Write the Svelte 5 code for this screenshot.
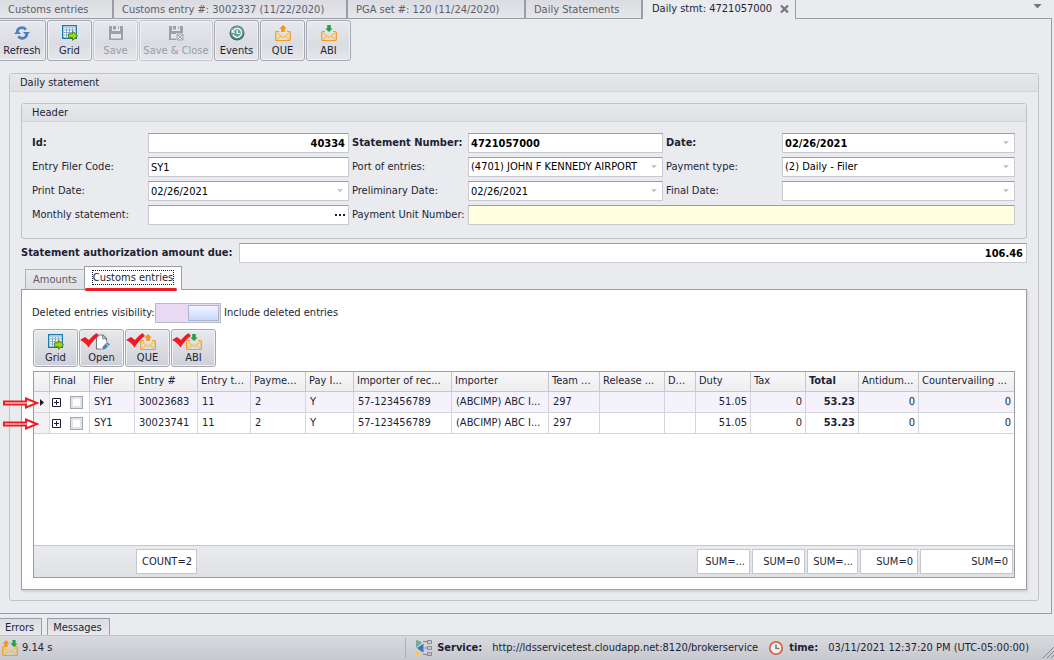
<script>
  const docTabs = [
    { title: "Customs entries", width: 114 },
    { title: "Customs entry #: 3002337 (11/22/2020)", width: 234 },
    { title: "PGA set #: 120 (11/24/2020)", width: 178 },
    { title: "Daily Statements", width: 117 },
  ];

  const toolbar = [
    { label: "Refresh", icon: "refresh", width: 48 },
    { label: "Grid", icon: "grid", width: 45 },
    { label: "Save", icon: "save", width: 45, disabled: true },
    { label: "Save & Close", icon: "saveClose", width: 74, disabled: true },
    { label: "Events", icon: "events", width: 45 },
    { label: "QUE", icon: "que", width: 45 },
    { label: "ABI", icon: "abi", width: 45 },
  ];

  const gridToolbar = [
    { label: "Grid", icon: "grid" },
    { label: "Open", icon: "open", marked: true },
    { label: "QUE", icon: "que", marked: true },
    { label: "ABI", icon: "abi", marked: true },
  ];

  const fields = [
    { id: "id", label: "Id:", value: "40334", bold: true, right: true },
    { id: "number", label: "Statement Number:", value: "4721057000", bold: true },
    { id: "date", label: "Date:", value: "02/26/2021", bold: true, kind: "date" },
    { id: "filer", label: "Entry Filer Code:", value: "SY1" },
    { id: "port", label: "Port of entries:", value: "(4701) JOHN F KENNEDY AIRPORT", kind: "select" },
    { id: "ptype", label: "Payment type:", value: "(2) Daily - Filer", kind: "select" },
    { id: "print", label: "Print Date:", value: "02/26/2021", kind: "date" },
    { id: "prelim", label: "Preliminary Date:", value: "02/26/2021", kind: "date" },
    { id: "final", label: "Final Date:", value: "", kind: "date" },
    { id: "monthly", label: "Monthly statement:", value: "", kind: "lookup" },
    { id: "unit", label: "Payment Unit Number:", value: "", wide: true },
  ];

  const columns = [
    { key: "filer", title: "Filer", width: 45 },
    { key: "entry", title: "Entry #", width: 63, sum: "COUNT=2" },
    { key: "type", title: "Entry t...", width: 53 },
    { key: "payment", title: "Payme...", width: 55 },
    { key: "payInd", title: "Pay I...", width: 48 },
    { key: "record", title: "Importer of rec...", width: 98 },
    { key: "importer", title: "Importer", width: 97 },
    { key: "team", title: "Team ...", width: 51 },
    { key: "release", title: "Release ...", width: 65 },
    { key: "d", title: "D...", width: 31 },
    { key: "duty", title: "Duty", width: 55, right: true, sum: "SUM=..." },
    { key: "tax", title: "Tax", width: 55, right: true, sum: "SUM=0" },
    { key: "total", title: "Total", width: 53, right: true, bold: true, sum: "SUM=..." },
    { key: "antidumping", title: "Antidum...", width: 60, right: true, sum: "SUM=0" },
    { key: "countervailing", title: "Countervailing ...", width: 95, right: true, sum: "SUM=0" },
  ];

  const base = {
    filer: "SY1",
    type: "11",
    payment: "2",
    payInd: "Y",
    record: "57-123456789",
    importer: "(ABCIMP) ABC I...",
    team: "297",
    release: "",
    d: "",
    duty: "51.05",
    tax: "0",
    total: "53.23",
    antidumping: "0",
    countervailing: "0",
  };
  const rows = [
    { ...base, entry: "30023683" },
    { ...base, entry: "30023741" },
  ];

  let selected = $state(0);
  let includeDeleted = $state(true);
</script>

{#snippet envelope()}
  <path d="M4 6.500H1.700Q.700 6.500 .700 7.500v7q0 1 1 1h12.600q1 0 1-1v-7q0-1-1-1H12" fill="none" stroke="#f79a2b" stroke-width="1.200" />
  <path d="M1.500 7.500 8 12.500l6.500-5M2 14.500l4-3.500M14 14.500 10 11" fill="none" stroke="#fbc23c" stroke-width="1.200" />
{/snippet}

{#snippet arrowDown()}
  <svg class="caret" viewBox="0 0 6 4" aria-hidden="true"><path d="M0 0h6L3 3.600z" fill="#c9cad1" /></svg>
{/snippet}

{#snippet icon(name)}
  <svg class="icon" viewBox="0 0 16 16" aria-hidden="true">
    {#if name === "refresh"}
      <path d="M3 6.500A5 5 0 0 1 11.800 4.600M13 9.500A5 5 0 0 1 4.200 11.400" fill="none" stroke="#4a80bd" stroke-width="2.600" />
      <path d="M9 7h7l-3.500 4zM0 9h7L3.500 5z" fill="#4a80bd" />
    {:else if name === "grid"}
      <path d="M.7.700h13.600v12.600H.7z" fill="#fff" stroke="#2079ad" stroke-width="1.400" />
      <path d="M1.400 1.400h12.200v2H1.400z" fill="#a9d3e8" />
      <path d="M2 5h11M2 7.500h11M2 10h11M4.500 3v9.500M7.500 3v9.500M10.500 3v9.500" stroke="#86aac7" stroke-width="1" />
      <path d="M6.600 8.800h4V6.300l5 4.500-5 4.500v-2.600h-4z" fill="#a5d319" stroke="#47880f" stroke-width="1" />
    {:else if name === "save" || name === "saveClose"}
      <path d="M1 1h14v14H1z" fill="#8f9097" />
      <path d="M4 1h8v5H4zM3 9h10v4.500H3z" fill="#e7e8eb" />
      <path d="M5 1h3v3.500H5zM10 1.500h1V4h-1z" fill="#8f9097" />
      {#if name === "saveClose"}
        <path d="M8 8h8v8H8z" fill="#e7e8eb" />
        <path d="M9 9h6v6H9zM9.500 9.500l5 5M14.500 9.500l-5 5" fill="none" stroke="#8f9097" stroke-width="1" />
      {/if}
    {:else if name === "events"}
      <circle cx="8" cy="8" r="7.500" fill="#38736f" />
      <circle cx="8" cy="7.200" r="6.500" fill="#6b9d98" />
      <path d="M4 9.500A4.400 4.400 0 1 0 4.200 5.800M3.200 4.500v2.700h2.700" fill="none" stroke="#fff" stroke-width="1.200" />
      <path d="M8.200 5v3.500h2.600" fill="none" stroke="#fff" stroke-width="1.200" />
    {:else if name === "que"}
      {@render envelope()}
      <path d="M8 0l3.800 3.800H9.800V7H6.200V3.800H4.200z" fill="#f7941e" />
    {:else if name === "abi"}
      {@render envelope()}
      <path d="M8 7L4.200 3.500h2V0h3.600v3.500h2z" fill="#20a149" />
    {:else if name === "open"}
      <path d="M2.500 1H9L12.500 4.500V8L8 15H2.500z" fill="#fff" />
      <path d="M7.500 15h-5V1H9l3.500 3.500v3M8.700 1v3.800h3.800" fill="none" stroke="#77787f" stroke-width="1.100" />
      <path d="M8 15.800l.8-3.300L13.200 8l2.600 2.600-4.500 4.500z" fill="#4d82bc" />
      <path d="M11.700 9.400l2.800 2.700" stroke="#fff" stroke-width=".7" />
    {:else if name === "status"}
      {@render envelope()}
      <path d="M4 0l3.600 3.800H5.600V7H2.400V3.800H.4z" fill="#f7941e" />
      <path d="M12 7L8.400 3.500h2V0h3.200v3.500h2z" fill="#20a149" />
    {:else if name === "service"}
      <path d="M0 0Q4 .5 6 2.500L0 8z" fill="#72a994" />
      <path d="M7.500 3.500v9Q4 11 1 8z" fill="#3f78b8" />
      <path d="M0 10l5 4.500Q3 16 0 16z" fill="#f5c46b" />
      <path d="M7 1.500h4M8.500 8H11M7 14.500h4" stroke="#85868d" stroke-width="1" />
      <path d="M11.500.5h4v2.800h-4zM11.500 6.600h4v2.800h-4zM11.500 12.700h4v2.800h-4z" fill="none" stroke="#85868d" />
    {:else if name === "clock"}
      <circle cx="8" cy="8" r="6.200" fill="#f2f0f1" stroke="#dc6444" stroke-width="1.800" />
      <path d="M8 4.500V8.500h3.500" fill="none" stroke="#787981" stroke-width="1.600" />
    {/if}
  </svg>
{/snippet}

<div class="app">
  <nav class="doc-tabs">
    {#each docTabs as tab}
      <button class="doc-tab" style="width: {tab.width}px">{tab.title}</button>
    {/each}
    <div class="doc-tab current">
      <span>Daily stmt: 4721057000</span>
      <button class="close" aria-label="Close tab">
        <svg viewBox="0 0 9 8" aria-hidden="true"><path d="M1 .5l7 7M8 .5l-7 7" stroke="#757682" stroke-width="2.200" /></svg>
      </button>
    </div>
    <div class="tab-rest">
      <button class="close" aria-label="Tab list">
        <svg viewBox="0 0 8 5" aria-hidden="true"><path d="M0 0h8L4 4.500z" fill="#757682" /></svg>
      </button>
    </div>
  </nav>

  <main class="doc">
    <div class="toolbar main-tools">
      {#each toolbar as b}
        <button class="tool" disabled={b.disabled} style="width: {b.width}px">
          {@render icon(b.icon)}
          <span>{b.label}</span>
        </button>
      {/each}
    </div>

    <section class="group statement">
      <h2>Daily statement</h2>
      <div class="statement-body">
        <section class="group">
          <h2>Header</h2>
          <div class="form">
            {#each fields as f}
              <label for={f.id} class:bold={f.bold}>{f.label}</label>
              <div class="field" class:bold={f.bold} class:wide={f.wide}>
                {#if f.kind === "select"}
                  <select id={f.id}><option>{f.value}</option></select>
                  {@render arrowDown()}
                {:else}
                  <input id={f.id} type="text" value={f.value} class:right={f.right} />
                  {#if f.kind === "date"}
                    {@render arrowDown()}
                  {:else if f.kind === "lookup"}
                    <button class="dots" aria-label="Select statement">
                      <svg viewBox="0 0 10 2" aria-hidden="true"><path d="M0 0h2v2H0zM4 0h2v2H4zM8 0h2v2H8z" fill="#1c1c30" /></svg>
                    </button>
                  {/if}
                {/if}
              </div>
            {/each}
          </div>
        </section>

        <div class="amount bold">
          <label for="amount">Statement authorization amount due:</label>
          <div class="field"><input id="amount" type="text" value="106.46" class="right" /></div>
        </div>

        <div class="page-tabs">
          <button class="page-tab">Amounts</button>
          <button class="page-tab current"><span>Customs entries</span></button>
        </div>

        <div class="page">
          <div class="toggle-row">
            <label for="deleted">Deleted entries visibility:</label>
            <input id="deleted" class="switch" type="checkbox" bind:checked={includeDeleted} />
            <span>Include deleted entries</span>
          </div>

          <div class="toolbar inner">
            {#each gridToolbar as b}
              <button class="tool">
                {@render icon(b.icon)}
                <span>{b.label}</span>
                {#if b.marked}
                  <svg class="tick" viewBox="0 0 19 15" aria-hidden="true"><path d="M0 7L5 4l4 3Q12 3 16.500 0L19 3Q14 6 8.500 14.500 5 9 0 7z" fill="#ed1c24" /></svg>
                {/if}
              </button>
            {/each}
          </div>

          <table>
            <colgroup>
              <col style="width: 16px" />
              <col style="width: 40px" />
              {#each columns as c}<col style="width: {c.width}px" />{/each}
            </colgroup>
            <thead>
              <tr>
                <th></th>
                <th>Final</th>
                {#each columns as c}<th class:bold={c.bold}>{c.title}</th>{/each}
              </tr>
            </thead>
            <tbody>
              {#each rows as row, i}
                <tr class:selected={selected === i} onclick={() => (selected = i)}>
                  <td class="indicator">
                    <svg class="pointer" viewBox="0 0 36 12" aria-hidden="true">
                      <path d="M1 4.500h22V1.500L34 6 23 10.500V7.500H1z" fill="#fff" stroke="#ed1c24" stroke-width="2" />
                    </svg>
                    {#if selected === i}
                      <svg class="row-mark" viewBox="0 0 4 7" aria-hidden="true"><path d="M0 0l4 3.500L0 7z" fill="#1c1c30" /></svg>
                    {/if}
                  </td>
                  <td class="final">
                    <div>
                      <button class="expand" aria-label="Expand row">
                        <svg viewBox="0 0 9 9" aria-hidden="true"><path d="M.5.5h8v8h-8zM2 4.500h5M4.500 2v5" fill="none" stroke="#1c1c30" /></svg>
                      </button>
                      <input type="checkbox" aria-label="Final" />
                    </div>
                  </td>
                  {#each columns as c}
                    <td class:right={c.right} class:bold={c.bold}>{row[c.key]}</td>
                  {/each}
                </tr>
              {/each}
              <tr class="filler"><td colspan={columns.length + 2}></td></tr>
            </tbody>
            <tfoot>
              <tr>
                <td></td>
                <td></td>
                {#each columns as c}
                  <td>{#if c.sum}<div class="sum">{c.sum}</div>{/if}</td>
                {/each}
              </tr>
            </tfoot>
          </table>
        </div>
      </div>
    </section>
  </main>

  <div class="dock-tabs">
    <button>Errors</button>
    <button>Messages</button>
  </div>

  <footer class="status">
    <div class="timing">
      {@render icon("status")}
      <span>9.14 s</span>
    </div>
    <div class="info">
      {@render icon("service")}
      <b>Service:</b>
      <span class="url">http://ldsservicetest.cloudapp.net:8120/brokerservice</span>
      {@render icon("clock")}
      <b>time:</b>
      <span class="now">03/11/2021 12:37:20 PM (UTC-05:00:00)</span>
      <svg class="grip" viewBox="0 0 12 12" aria-hidden="true"><path d="M1 12L12 1M5 12l7-7M9 12l3-3" stroke="#85868f" /></svg>
    </div>
  </footer>
</div>

<style>
  :global(body) {
    background: #eaebef;
  }

  .app {
    display: flex;
    flex-direction: column;
    min-height: 100vh;
    font-family: Tahoma, "DejaVu Sans Condensed", "Noto Sans", sans-serif;
    font-size: 11px;
    line-height: 14px;
    color: #201f35;
    white-space: nowrap;
  }

  .app * {
    box-sizing: border-box;
  }

  button,
  input,
  select {
    font: inherit;
    color: inherit;
    margin: 0;
    padding: 0;
    border: 0;
    border-radius: 0;
    background: none;
  }

  svg {
    display: block;
    flex: none;
  }

  .bold {
    font-weight: bold;
  }

  .icon {
    width: 16px;
    height: 16px;
  }

  /* document tabs */
  .doc-tabs {
    display: flex;
    height: 19px;
    padding-right: 2px;
  }

  .doc-tab {
    flex: none;
    padding: 1px 8px 0;
    text-align: left;
    color: #5c5d69;
    background: linear-gradient(#dbdce1, #e6e7eb);
    border-right: 2px solid #9b9ca8;
    border-bottom: 1px solid #9b9ca8;
  }

  .doc-tab.current {
    display: flex;
    align-items: center;
    justify-content: space-between;
    width: 153px;
    padding: 0 6px 2px 9px;
    color: #201f35;
    background: none;
    border-right-width: 1px;
    border-bottom: 0;
  }

  .close svg {
    width: 9px;
    height: 8px;
  }

  .tab-rest {
    flex: 1;
    display: flex;
    align-items: center;
    justify-content: flex-end;
    padding: 0 10px 6px 0;
    border-bottom: 1px solid #9b9ca8;
  }

  .tab-rest svg {
    height: 5px;
  }

  .doc {
    flex: 1;
    display: flex;
    flex-direction: column;
    margin-right: 2px;
    padding: 1px 12px 12px 0;
    border-right: 1px solid #9b9ca8;
    border-bottom: 1px solid #9b9ca8;
  }

  /* toolbars */
  .toolbar {
    display: flex;
    gap: 1px;
  }

  .main-tools {
    margin-left: -2px;
  }

  .tool {
    position: relative;
    display: flex;
    flex-direction: column;
    align-items: center;
    justify-content: space-between;
    width: 45px;
    height: 41px;
    padding: 4px 0 2px;
    border: 1px solid #a6a7b2;
    border-radius: 3px;
    background: linear-gradient(#e8e9ed, #dadce1 60%, #e6e7eb);
    box-shadow: inset 0 0 0 1px #f0f1f4;
  }

  .tool:disabled {
    color: #9a9ba5;
    border-color: #c6c7ce;
  }

  .tool:disabled .icon {
    opacity: 0.8;
  }

  .inner .tool {
    height: 38px;
    padding: 4px 0 1px;
    background: linear-gradient(#e8e9ed, #cfd0d7);
  }

  .tick {
    position: absolute;
    left: 0;
    top: 3px;
    width: 19px;
    height: 15px;
  }

  /* groups */
  .group {
    border: 1px solid #c1c2ca;
    border-radius: 3px;
  }

  .group h2 {
    margin: 0;
    height: 18px;
    padding: 2px 10px;
    font-size: 11px;
    font-weight: normal;
    line-height: 14px;
    background: linear-gradient(#e7e8ec, #dfe0e4);
    border-bottom: 1px solid #d2d3d8;
  }

  .statement {
    flex: 1;
    margin: 12px 0 0 9px;
  }

  .statement-body {
    padding: 11px 11px 10px;
  }

  .form {
    display: grid;
    grid-template-columns: 116px minmax(0, 201fr) 119px minmax(0, 195fr) 119px minmax(0, 233fr);
    row-gap: 4px;
    align-items: center;
    padding: 11px 11px 13px 10px;
  }

  .form label:not(:nth-child(6n + 1)) {
    padding-left: 3px;
  }

  .field {
    flex: 1;
    display: flex;
    align-items: center;
    height: 20px;
    padding: 0 3px 0 2px;
    background: #fff;
    border: 1px solid #c9cad1;
    border-top-color: #9b9ca8;
    color: #000;
  }

  .field.wide {
    grid-column: span 3;
    background: #ffffdf;
  }

  .field input,
  .field select {
    flex: 1;
    min-width: 0;
    height: 16px;
    appearance: none;
    outline: none;
  }

  .right,
  .field .right {
    text-align: right;
  }

  .caret {
    width: 6px;
    height: 4px;
    margin: 0 2px;
  }

  .dots svg {
    width: 10px;
    height: 2px;
  }

  .amount {
    display: flex;
    align-items: center;
    gap: 4px;
    margin-top: 4px;
  }

  .amount label {
    flex: none;
    width: 214px;
  }

  /* page control */
  .page-tabs {
    display: flex;
    align-items: flex-end;
    height: 23px;
    margin-top: 3px;
    padding-left: 4px;
  }

  .page-tab {
    width: 59px;
    height: 20px;
    color: #5c5d69;
    background: linear-gradient(#e9eaed, #dedfe4);
    border: 1px solid #b0b1bb;
    border-width: 1px 0 0 1px;
  }

  .page-tab.current {
    position: relative;
    z-index: 1;
    width: 98px;
    height: 24px;
    margin-bottom: -1px;
    padding: 0 3px 1px;
    color: #201f35;
    background: #fff;
    border-width: 1px 1px 0;
    border-color: #9b9ca8;
  }

  .page-tab.current::after {
    content: "";
    position: absolute;
    left: 0;
    right: 4px;
    bottom: -1px;
    height: 3px;
    border-radius: 2px;
    background: #ed1c24;
  }

  .page-tab span {
    outline: 1px dotted #201f35;
  }

  .page {
    padding: 13px 12px 11px 11px;
    background: #fff;
    border: 1px solid #9b9ca8;
    box-shadow: 1px 2px 2px #d0d1d7;
  }

  .toggle-row {
    display: flex;
    align-items: center;
    height: 20px;
    margin-left: -1px;
  }

  .toggle-row label {
    flex: none;
    width: 123px;
  }

  .switch {
    appearance: none;
    display: flex;
    width: 66px;
    height: 20px;
    margin-right: 3px;
    padding: 1px;
    background: #e9d9f2;
    border: 1px solid #b9bac3;
  }

  .switch::before {
    content: "";
    width: 29px;
    border: 1px solid #a9b3d2;
    background: linear-gradient(#f1f5ff, #c9d8fa);
  }

  .switch:checked::before {
    margin-left: auto;
  }

  .toolbar.inner {
    margin: 6px 0 4px;
  }

  /* entries grid */
  table {
    width: 100%;
    table-layout: fixed;
    border-collapse: separate;
    border-spacing: 0;
    border: 1px solid #9b9ca8;
  }

  th,
  td {
    height: 21px;
    padding: 0 4px;
    overflow: hidden;
    text-align: left;
    border-right: 1px solid #d5d6dc;
    border-bottom: 1px solid #d5d6dc;
  }

  th {
    height: 20px;
    padding: 0 3px 1px;
    font-weight: normal;
    background: linear-gradient(#f8f8f9, #ededf0);
    border-color: #c6c7ce;
  }

  th.bold {
    font-weight: bold;
  }

  th:last-child,
  td:last-child {
    border-right: 0;
  }

  td.right {
    padding: 0 3px;
  }

  .selected td {
    background: #f5f2fc;
  }

  td.indicator {
    position: relative;
    overflow: visible;
    background: #f2f2f4;
  }

  .selected td.final {
    background: #fff;
  }

  .pointer {
    position: absolute;
    right: 10px;
    top: 5px;
    width: 36px;
    height: 12px;
  }

  .row-mark {
    width: 4px;
    height: 7px;
    margin-left: 2px;
  }

  td.final {
    padding: 0 2px;
  }

  .final div {
    display: flex;
    align-items: center;
    gap: 9px;
  }

  .expand svg {
    width: 9px;
    height: 9px;
  }

  .final input {
    appearance: none;
    width: 13px;
    height: 13px;
    background: #fff;
    border: 1px solid #a4a5b0;
    box-shadow: inset 0 0 0 2px #e2e3e7;
  }

  .filler td {
    height: 112px;
    border-bottom-color: #c6c7ce;
  }

  tfoot td {
    height: 31px;
    padding: 0 1px;
    border: 0;
    background: linear-gradient(#eaebef, #e0e1e5);
  }

  .sum {
    height: 25px;
    padding: 5px 4px;
    text-align: right;
    background: #fff;
    border: 1px solid #c6c7ce;
  }

  /* bottom */
  .dock-tabs {
    display: flex;
    gap: 5px;
    padding-top: 4px;
  }

  .dock-tabs button {
    height: 17px;
    padding: 1px 7px 0 5px;
    background: linear-gradient(#dcdde2, #e8e9ed);
    border: 1px solid #9b9ca8;
    border-bottom: 0;
  }

  .dock-tabs button:first-child {
    border-left: 0;
  }

  .status {
    display: flex;
    align-items: center;
    justify-content: space-between;
    height: 25px;
    padding-left: 2px;
    background: linear-gradient(#d9dade, #c8c9cf);
    border-top: 1px solid #c1c2ca;
  }

  .timing {
    display: flex;
    align-items: center;
    gap: 4px;
  }

  .info {
    display: flex;
    align-items: center;
    gap: 5px;
    height: 20px;
    padding-left: 10px;
    border-left: 1px solid #acadb6;
  }

  .url {
    margin: 0 5px;
  }

  .now {
    margin: 0 8px 0 5px;
  }

  .grip {
    align-self: flex-end;
    width: 12px;
    height: 12px;
  }
</style>
